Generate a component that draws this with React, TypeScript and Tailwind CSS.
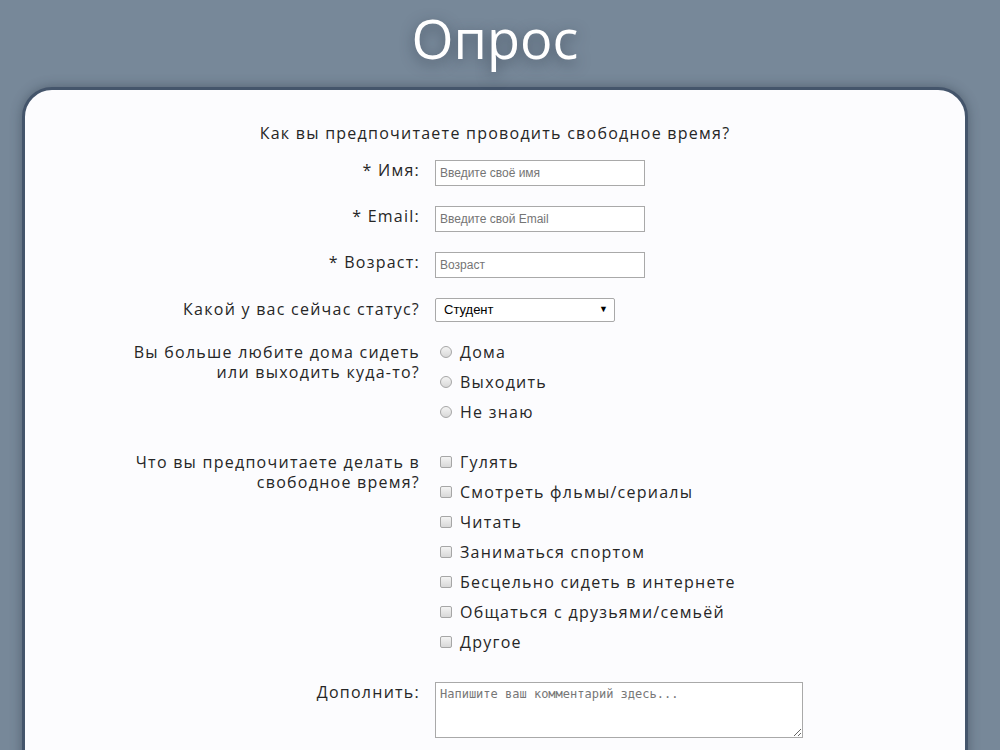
const font = "font-['Open_Sans',_'DejaVu_Sans',_sans-serif]";
const txt = "text-[16px] leading-5 tracking-[1.25px] text-[#262626]";

function Radio({ label }: { label: string }) {
  return (
    <div className="flex h-[30px] items-center">
      <span className="ml-[5px] mr-[8px] h-[12px] w-[12px] rounded-full border border-[#a6a6a6] bg-gradient-to-b from-[#f4f4f4] to-[#d8d8d8]" />
      <span className={txt}>{label}</span>
    </div>
  );
}

function Check({ label }: { label: string }) {
  return (
    <div className="flex h-[30px] items-center">
      <span className="ml-[5px] mr-[8px] h-[12px] w-[12px] rounded-[2px] border border-[#a6a6a6] bg-gradient-to-b from-[#f4f4f4] to-[#d8d8d8]" />
      <span className={txt}>{label}</span>
    </div>
  );
}

function Row({
  label,
  className,
  labelClass,
  children,
}: {
  label: React.ReactNode;
  className?: string;
  labelClass?: string;
  children: React.ReactNode;
}) {
  return (
    <div className={"flex items-start " + (className ?? "")}>
      <div className={"w-[395px] shrink-0 text-right " + txt + " " + (labelClass ?? "")}>
        {label}
      </div>
      <div className="ml-[15px]">{children}</div>
    </div>
  );
}

const inputCls =
  "block h-[26px] w-[210px] border border-[#a9a9a9] bg-white px-[4px] font-['Liberation_Sans',_Arial,_sans-serif] text-[12px] text-[#222] placeholder:text-[#757575] outline-none";

export default function App() {
  const leisure = [
    "Гулять",
    "Смотреть фльмы/сериалы",
    "Читать",
    "Заниматься спортом",
    "Бесцельно сидеть в интернете",
    "Общаться с друзьями/семьёй",
    "Другое",
  ];

  return (
    <div className={"min-h-[750px] w-full overflow-hidden bg-[#778899] " + font}>
      <div className="w-[990px]">
        <h1 className="pt-[6px] text-center text-[54px] leading-[64px] font-medium text-white [text-shadow:0_4px_14px_rgba(40,50,65,0.6)]">
          Опрос
        </h1>

        <div className="ml-[22px] mt-[17px] h-[700px] w-[946px] rounded-[30px] border-[3px] border-[#44556b] bg-[#fcfcfe] pt-[33px] shadow-[0_0_12px_rgba(40,50,65,0.45)]">
          <p className={"text-center " + txt}>
            Как вы предпочитаете проводить свободное время?
          </p>

          <Row label="* Имя:" className="mt-[17px]">
            <input className={inputCls} placeholder="Введите своё имя" />
          </Row>

          <Row label="* Email:" className="mt-[20px]">
            <input className={inputCls} placeholder="Введите свой Email" />
          </Row>

          <Row label="* Возраст:" className="mt-[20px]">
            <input className={inputCls} placeholder="Возраст" />
          </Row>

          <Row label="Какой у вас сейчас статус?" className="mt-[20px]" labelClass="pt-[1px]">
            <div className="flex h-[24px] w-[180px] items-center justify-between rounded-[2px] border border-[#a9a9a9] bg-white pl-[8px] pr-[6px] font-['Liberation_Sans',_Arial,_sans-serif] text-[13px] text-black">
              <span>Студент</span>
              <span className="text-[9px]">▼</span>
            </div>
          </Row>

          <Row
            label={
              <>
                Вы больше любите дома сидеть
                <br />
                или выходить куда-то?
              </>
            }
            className="mt-[15px]"
            labelClass="pt-[5px]"
          >
            <div className="flex flex-col">
              <Radio label="Дома" />
              <Radio label="Выходить" />
              <Radio label="Не знаю" />
            </div>
          </Row>

          <Row
            label={
              <>
                Что вы предпочитаете делать в
                <br />
                свободное время?
              </>
            }
            className="mt-[20px]"
            labelClass="pt-[5px]"
          >
            <div className="flex flex-col">
              {leisure.map((l) => (
                <Check key={l} label={l} />
              ))}
            </div>
          </Row>

          <Row label="Дополнить:" className="mt-[25px]">
            <textarea
              className="block h-[56px] w-[368px] border border-[#a9a9a9] bg-white px-[4px] py-[2px] font-['DejaVu_Sans_Mono',_monospace] text-[12px] text-[#222] placeholder:text-[#777] outline-none"
              placeholder="Напишите ваш комментарий здесь..."
            />
          </Row>
        </div>
      </div>
    </div>
  );
}
